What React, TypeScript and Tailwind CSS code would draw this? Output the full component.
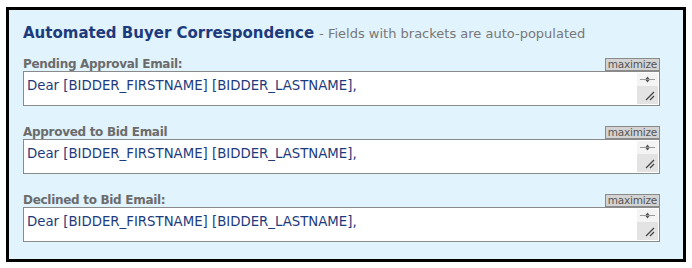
import React from 'react'

const fields = [
  { label: 'Pending Approval Email:' },
  { label: 'Approved to Bid Email' },
  { label: 'Declined to Bid Email:' },
]

function Scroller() {
  return (
    <div className="absolute right-[1px] top-[1px] bottom-[1px] w-[21px] flex flex-col">
      <div className="h-[13px] bg-[#f4f4f4] flex items-center justify-center">
        <svg width="21" height="13" viewBox="0 0 21 13">
          <line x1="3" y1="6.5" x2="18" y2="6.5" stroke="#9a9a9a" strokeWidth="1" />
          <path d="M8.5 6 L10.5 3.5 L12.5 6 Z" fill="#555" />
          <path d="M8.5 7 L10.5 9.5 L12.5 7 Z" fill="#555" />
        </svg>
      </div>
      <div className="flex-1 bg-[#e3e3e3] relative">
        <svg className="absolute right-[3px] bottom-[3px]" width="11" height="11" viewBox="0 0 11 11">
          <line x1="2" y1="10" x2="10" y2="2" stroke="#444" strokeWidth="1.2" />
          <line x1="6" y1="10" x2="10" y2="6" stroke="#444" strokeWidth="1.2" />
        </svg>
      </div>
    </div>
  )
}

function EmailField({ label }: { label: string }) {
  return (
    <div className="flex flex-col">
      <div className="flex items-end justify-between h-[13px]">
        <span className="text-[12px] leading-[13px] font-bold tracking-[-0.3px] text-[#6b6b6b]">{label}</span>
        <span className="h-[13px] px-[2px] bg-[#d3d3d3] border border-[#8a8a8a] text-[10.5px] leading-[11px] tracking-[-0.2px] text-[#555] flex items-center">
          maximize
        </span>
      </div>
      <div className="relative h-[35px] bg-white border border-[#8a8a8a]">
        <div className="pl-[3px] pt-[6px] text-[13.3px] leading-[15px] text-[#1c3a7c]">
          Dear [BIDDER_FIRSTNAME] [BIDDER_LASTNAME],
        </div>
        <Scroller />
      </div>
    </div>
  )
}

export default function App() {
  return (
    <div
      className="w-[692px] h-[268px] bg-white pt-[7px] pl-[6px]"
      style={{ fontFamily: 'Tahoma, "DejaVu Sans", sans-serif' }}
    >
      <div className="w-[680px] h-[255px] border-[3px] border-black bg-[#e1f3fd] pl-[14px] pr-[23px] pt-[12px]">
        <div className="flex items-baseline h-[22px]">
          <span className="text-[15px] font-bold text-[#1c3a7c]">Automated Buyer Correspondence</span>
          <span className="ml-[5px] text-[13px] text-[#777]">- Fields with brackets are auto-populated</span>
        </div>
        <div className="flex flex-col gap-[20px] mt-[14px]">
          {fields.map((f) => (
            <EmailField key={f.label} label={f.label} />
          ))}
        </div>
      </div>
    </div>
  )
}
